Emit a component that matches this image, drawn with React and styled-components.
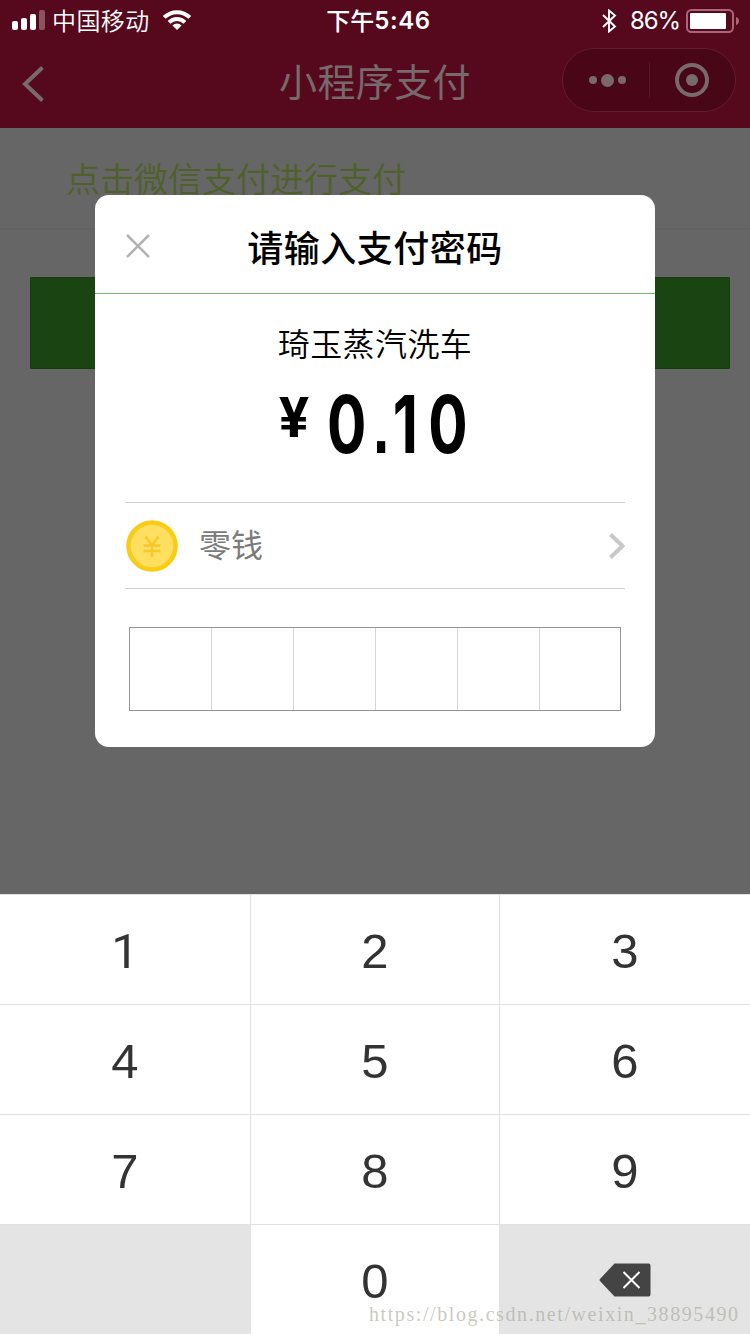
import React from "react";
import styled, { createGlobalStyle } from "styled-components";

const cjk = `"Noto Sans CJK SC", sans-serif`;

const GlobalStyle = createGlobalStyle`
  * { box-sizing: border-box; }
  body { margin: 0; background: #666; font-family: "Inter", ${cjk}; }
`;

const Screen = styled.div`
  position: relative;
  display: flex;
  flex-direction: column;
  width: 750px;
  height: 1334px;
  overflow: hidden;
  background: #666;
`;

const Label = styled.span`
  font-family: ${(p) => p.$font || cjk};
  font-size: ${(p) => p.$size}px;
  font-weight: ${(p) => p.$weight || 400};
  line-height: ${(p) => p.$line || p.$size}px;
  letter-spacing: ${(p) => p.$spacing || 0}px;
  color: ${(p) => p.$color || "#fff"};
  white-space: nowrap;
`;

const Header = styled.header`
  height: 128px;
  background: #56091d;
`;

const StatusBar = styled.div`
  display: grid;
  grid-template-columns: 250px 1fr 250px;
  height: 40px;
`;

const StatusGroup = styled.div`
  display: flex;
  align-items: center;
  justify-content: ${(p) => p.$align || "flex-start"};
  padding: ${(p) => p.$pad || 0};
`;

const NavBar = styled.div`
  display: grid;
  grid-template-columns: 187px 1fr 187px;
  align-items: center;
  height: 88px;
`;

const NavBack = styled.button`
  display: flex;
  padding: 0 0 0 20px;
  margin-top: -1px;
  border: 0;
  background: none;
`;

const NavTitle = styled.h1`
  margin: 0;
  display: flex;
  justify-content: center;
  padding-bottom: 8px;
`;

const Capsule = styled.div`
  display: flex;
  align-items: center;
  width: 174px;
  height: 64px;
  margin: -8px 0 0 -1px;
  padding-right: 1px;
  border: 1px solid #641b2d;
  border-radius: 32px;
  background: #480616;
`;

const CapsuleHalf = styled.div`
  flex: 1;
  display: flex;
  justify-content: center;
  align-items: center;
  gap: 4px;
  height: 36px;
  padding-left: ${(p) => p.$shift || 0}px;
  & + & { border-left: 1px solid #5b1427; }
`;

const Dot = styled.i`
  width: ${(p) => p.$size}px;
  height: ${(p) => p.$size}px;
  border-radius: 50%;
  background: #77696c;
`;

const Ring = styled.span`
  display: flex;
  align-items: center;
  justify-content: center;
  width: 34px;
  height: 34px;
  border: 4px solid #77696c;
  border-radius: 50%;
`;

const Hint = styled.p`
  margin: 0;
  height: 102px;
  padding: 33px 0 0 66px;
  border-bottom: 2px solid #616161;
`;

const PayButton = styled.button`
  display: block;
  width: 700px;
  height: 92px;
  margin: 47px 30px 0 30px;
  border: 1px solid #173c10;
  border-radius: 1px;
  background: #1a4512;
`;

const Dialog = styled.section`
  position: absolute;
  top: 195px;
  left: 95px;
  width: 560px;
  height: 552px;
  border-radius: 14px;
  background: #fff;
`;

const DialogHeader = styled.div`
  display: grid;
  grid-template-columns: 86px 1fr 86px;
  align-items: center;
  justify-items: center;
  height: 99px;
  padding-top: 4px;
  border-bottom: 1px solid #72c06d;
`;

const Merchant = styled.div`
  display: flex;
  justify-content: center;
  padding-top: 30px;
`;

const Amount = styled.div`
  display: flex;
  align-items: flex-start;
  height: 142px;
  padding: 30px 0 0 184px;
`;

const Yen = styled.span`
  width: 47.5px;
  font: 700 56px/56px Roboto, sans-serif;
  color: #000;
`;

const Digits = styled.span`
  margin-top: -6px;
  font: 700 80px/80px Inter, sans-serif;
  letter-spacing: 6px;
  white-space: nowrap;
  transform: scaleX(0.73);
  transform-origin: 0 0;
  color: #000;
`;

const Point = styled.span`
  margin: 0 -1px 0 3px;
  font-family: "Liberation Sans", sans-serif;
`;

const One = styled.span`
  margin-right: 8px;
`;

const Method = styled.div`
  display: flex;
  align-items: center;
  height: 87px;
  margin: 0 30px;
  border: solid #d0d0d0;
  border-width: 1px 0;
`;

const MethodName = styled.div`
  flex: 1;
  display: flex;
  padding: 0 0 5px 20px;
`;

const Chevron = styled.svg`
  margin-right: -1px;
`;

const PinBox = styled.div`
  display: grid;
  grid-template-columns: repeat(6, 82px);
  width: 492px;
  height: 84px;
  margin: 38px 0 0 34px;
  border: 1px solid #949494;
`;

const PinCell = styled.span`
  border-right: 1px solid #d6d6d6;
  &:last-child { border: 0; }
`;

const Keypad = styled.div`
  position: absolute;
  top: 894px;
  left: 0;
  display: grid;
  grid-template-columns: 250px 249px 251px;
  grid-template-rows: repeat(4, 110px);
  width: 750px;
`;

const Key = styled.button`
  display: flex;
  align-items: center;
  justify-content: center;
  padding: ${(p) => (p.$muted ? 0 : p.$plain ? 5 : 3)}px 0 0;
  border: solid #e2e2e2;
  border-width: 1px 0 0 ${(p) => (p.$first ? 0 : 1)}px;
  background: ${(p) => (p.$muted ? "#e4e4e4" : "#fff")};
  color: #333;
  font: 400 49px/50px ${(p) => (p.$plain ? "Roboto" : '"Liberation Sans"')}, Arial, sans-serif;
`;

const Watermark = styled.div`
  position: absolute;
  left: 369px;
  top: 1303px;
  font: 400 20px/22px "Liberation Serif", serif;
  letter-spacing: 1.58px;
  white-space: nowrap;
  color: rgba(165, 165, 150, 0.6);
`;

const Signal = () => (
  <svg width="34" height="20" viewBox="0 0 34 20" fill="#fff">
    <rect x="0" y="11" width="6" height="9" rx="2" />
    <rect x="9" y="8" width="6" height="12" rx="2" />
    <rect x="18" y="4" width="6" height="16" rx="2" />
    <rect x="27" y="0" width="6" height="20" rx="2" opacity=".3" />
  </svg>
);

const Wifi = () => (
  <svg width="28" height="20" viewBox="0 0 28 20">
    <g fill="none" stroke="#fff" strokeWidth="4">
      <path d="M1.2 7.4a18.2 18.2 0 0 1 25.6 0" />
      <path d="M6.1 12.3a11.2 11.2 0 0 1 15.8 0" />
    </g>
    <path d="M9.4 15.4a6.6 6.6 0 0 1 9.2 0L14 20z" fill="#fff" />
  </svg>
);

const Bluetooth = () => (
  <svg width="15" height="24" viewBox="0 0 15 24" fill="none" stroke="#fff" strokeWidth="1.9">
    <path d="M1 6l12 11.5-6 5V1.5l6 5L1 18" />
  </svg>
);

const Battery = () => (
  <svg width="53" height="24" viewBox="0 0 53 24">
    <rect x="1" y="1" width="46" height="22" rx="4.5" fill="none" stroke="#a8667a" strokeWidth="2" />
    <rect x="4" y="4" width="36" height="16" rx="1" fill="#fff" />
    <path d="M50 8c4 1 4 7 0 8z" fill="#a8667a" />
  </svg>
);

const Coin = () => (
  <svg width="54" height="54" viewBox="0 0 54 54">
    <circle cx="27" cy="27" r="23.5" fill="#fedf60" stroke="#f9cd16" strokeWidth="4.6" />
    <path d="M20.5 17.5L27 26.5L33.5 17.5M18.5 26.5H35.5M18.5 32H35.5M27 26V38" fill="none" stroke="#f7c828" strokeWidth="2.5" />
  </svg>
);

const Backspace = () => (
  <svg width="52" height="34" viewBox="0 0 52 34">
    <path d="M15.5 .5H49.5Q51.5 .5 51.5 2.5V31.5Q51.5 33.5 49.5 33.5H15.5L1 18Q0 17 1 16Z" fill="#444" />
    <path d="M24.5 9L40.5 25M40.5 9L24.5 25" stroke="#fff" strokeWidth="2" />
  </svg>
);

export default function App() {
  return (
    <Screen>
      <GlobalStyle />
      <Header>
        <StatusBar>
          <StatusGroup $pad="0 0 0 12px">
            <Signal />
            <StatusGroup $pad="0 13px 1px 6px">
              <Label $size={24} $weight={350} $spacing={0.4}>中国移动</Label>
            </StatusGroup>
            <Wifi />
          </StatusGroup>
          <StatusGroup $align="center" $pad="1px 0 0 7px">
            <StatusGroup $pad="0 0 2px 0">
              <Label $size={24} $weight={500}>下午</Label>
            </StatusGroup>
            <Label $size={24} $weight={600} $spacing={0.6} $font="Inter, sans-serif">5:46</Label>
          </StatusGroup>
          <StatusGroup $align="flex-end" $pad="1px 11px 0 0">
            <Bluetooth />
            <StatusGroup $pad="1px 6px 0 13px">
              <Label $size={24} $spacing={-1.1} $font="Inter, sans-serif">86%</Label>
            </StatusGroup>
            <Battery />
          </StatusGroup>
        </StatusBar>
        <NavBar>
          <NavBack aria-label="返回">
            <svg width="25" height="36" viewBox="0 0 25 36" fill="none" stroke="#77696c" strokeWidth="4">
              <path d="M22.5 1.5L5 18L22.5 34.5" />
            </svg>
          </NavBack>
          <NavTitle>
            <Label $size={38} $spacing={0.4} $color="#766a6d">小程序支付</Label>
          </NavTitle>
          <Capsule>
            <CapsuleHalf $shift={2}>
              <Dot $size={8} /><Dot $size={13} /><Dot $size={8} />
            </CapsuleHalf>
            <CapsuleHalf>
              <Ring><Dot $size={12} /></Ring>
            </CapsuleHalf>
          </Capsule>
        </NavBar>
      </Header>
      <Hint>
        <Label $size={34} $weight={350} $color="#4f6029">点击微信支付进行支付</Label>
      </Hint>
      <PayButton aria-label="支付" />

      <Dialog>
        <DialogHeader>
          <svg width="26" height="26" viewBox="0 0 26 26" stroke="#b2b2b2" strokeWidth="2.5">
            <path d="M2 2L24 24M24 2L2 24" />
          </svg>
          <Label $size={36} $spacing={0.5} $weight={500} $color="#000">请输入支付密码</Label>
        </DialogHeader>
        <Merchant>
          <Label $size={32} $weight={350} $spacing={0.4} $line={36} $color="#000">琦玉蒸汽洗车</Label>
        </Merchant>
        <Amount>
          <Yen>¥</Yen>
          <Digits>0<Point>.</Point><One>1</One>0</Digits>
        </Amount>
        <Method>
          <Coin />
          <MethodName>
            <Label $size={32} $color="#7b7b7b">零钱</Label>
          </MethodName>
          <Chevron width="18" height="28" viewBox="0 0 18 28" fill="none" stroke="#c8c8c8" strokeWidth="4">
            <path d="M2.5 2.5L14.5 14L2.5 25.5" />
          </Chevron>
        </Method>
        <PinBox>
          {[0, 1, 2, 3, 4, 5].map((n) => <PinCell key={n} />)}
        </PinBox>
      </Dialog>

      <Keypad>
        {["1", "2", "3", "4", "5", "6", "7", "8", "9"].map((n, i) => (
          <Key key={n} $first={i % 3 === 0} $plain={n === "1"}>{n}</Key>
        ))}
        <Key $first $muted aria-hidden="true" />
        <Key>0</Key>
        <Key $muted aria-label="删除"><Backspace /></Key>
      </Keypad>
      <Watermark>https://blog.csdn.net/weixin_38895490</Watermark>
    </Screen>
  );
}
